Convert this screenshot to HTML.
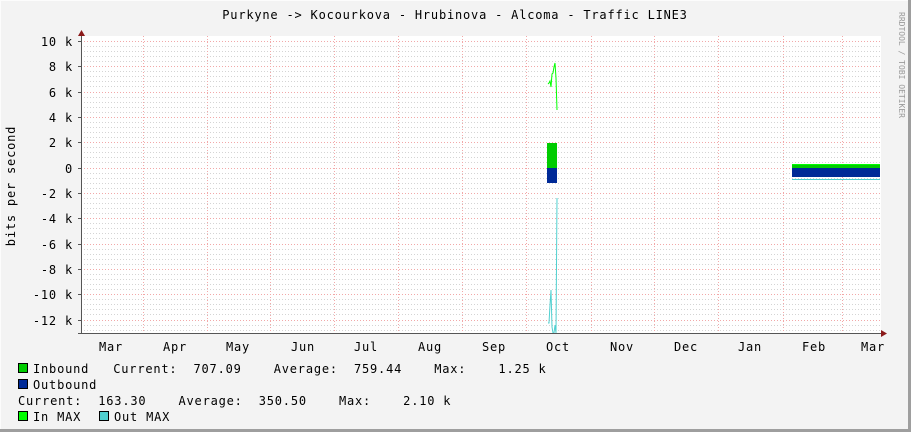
<!DOCTYPE html>
<html><head><style>
body{margin:0;width:911px;height:432px;overflow:hidden;background:#f3f3f3}
svg{display:block}
text{font-family:"DejaVu Sans Mono","Liberation Mono",monospace;font-size:12px;fill:#000;letter-spacing:0.8px}
</style></head><body>
<svg width="911" height="432" viewBox="0 0 911 432" xmlns="http://www.w3.org/2000/svg">
<rect x="0" y="0" width="911" height="432" fill="#f3f3f3"/>
<line x1="0" y1="0.5" x2="911" y2="0.5" stroke="#fcfcfc"/>
<line x1="0.5" y1="0" x2="0.5" y2="432" stroke="#fcfcfc"/>
<line x1="909.5" y1="0" x2="909.5" y2="432" stroke="#9e9e9e" stroke-width="3"/>
<line x1="0" y1="430.5" x2="911" y2="430.5" stroke="#9e9e9e" stroke-width="3"/>
<rect x="81" y="36" width="800" height="297" fill="#fff"/>
<g stroke="#d4d4d4" stroke-dasharray="1,2" stroke-width="1">
<path d="M81 46.5H881M81 51.5H881M81 56.5H881M81 61.5H881M81 71.5H881M81 76.5H881M81 81.5H881M81 86.5H881M81 97.5H881M81 102.5H881M81 107.5H881M81 112.5H881M81 122.5H881M81 127.5H881M81 132.5H881M81 137.5H881M81 147.5H881M81 152.5H881M81 157.5H881M81 162.5H881M81 173.5H881M81 178.5H881M81 183.5H881M81 188.5H881M81 198.5H881M81 203.5H881M81 208.5H881M81 213.5H881M81 223.5H881M81 228.5H881M81 233.5H881M81 238.5H881M81 249.5H881M81 254.5H881M81 259.5H881M81 264.5H881M81 274.5H881M81 279.5H881M81 284.5H881M81 289.5H881M81 299.5H881M81 304.5H881M81 309.5H881M81 314.5H881M81 325.5H881M81 330.5H881"/>
</g>
<g stroke="#f2a8a8" stroke-dasharray="1,2" stroke-width="1">
<path d="M81 41.5H881M81 66.5H881M81 92.5H881M81 117.5H881M81 142.5H881M81 168.5H881M81 193.5H881M81 218.5H881M81 244.5H881M81 269.5H881M81 294.5H881M81 320.5H881"/>
<path d="M143.5 36V333M207.5 36V333M270.5 36V333M334.5 36V333M398.5 36V333M462.5 36V333M526.5 36V333M591.5 36V333M654.5 36V333M718.5 36V333M783.5 36V333M842.5 36V333"/>
</g>
<rect x="547" y="143" width="10" height="25" fill="#00cc00"/>
<rect x="547" y="168" width="10" height="15" fill="#002a97"/>
<polyline points="548,84 549,83 550,81 551,87 552,74 553,73 554,67 555,63 556,78 557,110" fill="none" stroke="#00ff00" stroke-width="1"/>
<polyline points="548,323 549,323 550,305 551,290 552,327 553,333 554,333 555,325 556,333 557,198" fill="none" stroke="#50d0d0" stroke-width="1"/>
<rect x="792" y="165" width="88" height="3" fill="#00cc00"/>
<rect x="792" y="168" width="88" height="9" fill="#002a97"/>
<line x1="792" y1="164.5" x2="880" y2="164.5" stroke="#00ff00"/>
<line x1="792" y1="179.5" x2="880" y2="179.5" stroke="#50d0d0"/>
<line x1="81.5" y1="36" x2="81.5" y2="334" stroke="#555"/>
<line x1="78" y1="333.5" x2="884" y2="333.5" stroke="#555"/>
<path d="M78 36L85 36L81.5 30Z" fill="#8b1a1a"/>
<path d="M881 330L881 337L887 333.5Z" fill="#8b1a1a"/>
<g stroke="#555"><path d="M78 41.5H81M78 66.5H81M78 92.5H81M78 117.5H81M78 142.5H81M78 168.5H81M78 193.5H81M78 218.5H81M78 244.5H81M78 269.5H81M78 294.5H81M78 320.5H81"/></g>
<text x="455" y="19" text-anchor="middle">Purkyne -&gt; Kocourkova - Hrubinova - Alcoma - Traffic LINE3</text>
<g text-anchor="end">
<text x="73" y="46">10 k</text><text x="73" y="71">8 k</text><text x="73" y="97">6 k</text><text x="73" y="122">4 k</text><text x="73" y="147">2 k</text><text x="73" y="173">0</text><text x="73" y="198">-2 k</text><text x="73" y="223">-4 k</text><text x="73" y="249">-6 k</text><text x="73" y="274">-8 k</text><text x="73" y="299">-10 k</text><text x="73" y="325">-12 k</text>
</g>
<text transform="translate(15,186) rotate(-90)" text-anchor="middle">bits per second</text>
<text transform="translate(899,65) rotate(90)" text-anchor="middle" style="font-size:8px;fill:#999;letter-spacing:0">RRDTOOL / TOBI OETIKER</text>
<g text-anchor="middle">
<text x="111" y="351">Mar</text><text x="175" y="351">Apr</text><text x="238" y="351">May</text><text x="303" y="351">Jun</text><text x="366" y="351">Jul</text><text x="430" y="351">Aug</text><text x="494" y="351">Sep</text><text x="558" y="351">Oct</text><text x="622" y="351">Nov</text><text x="686" y="351">Dec</text><text x="750" y="351">Jan</text><text x="814" y="351">Feb</text><text x="873" y="351">Mar</text>
</g>
<rect x="18.5" y="363.5" width="9" height="9" fill="#00cc00" stroke="#000"/>
<rect x="18.5" y="379.5" width="9" height="9" fill="#002a97" stroke="#000"/>
<rect x="18.5" y="411.5" width="9" height="9" fill="#00ff00" stroke="#000"/>
<rect x="99.5" y="411.5" width="9" height="9" fill="#50d0d0" stroke="#000"/>
<text x="33" y="373" xml:space="preserve">Inbound   Current:  707.09    Average:  759.44    Max:    1.25 k</text>
<text x="33" y="389">Outbound</text>
<text x="18" y="405" xml:space="preserve">Current:  163.30    Average:  350.50    Max:    2.10 k</text>
<text x="33" y="421">In MAX</text>
<text x="114" y="421">Out MAX</text>
</svg>
</body></html>
